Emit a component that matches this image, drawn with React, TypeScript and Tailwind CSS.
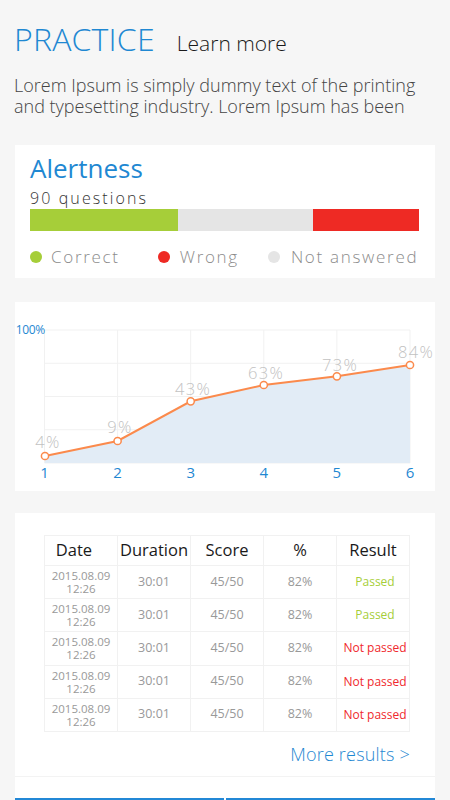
import React from 'react';

const BLUE = '#1f88d2';

const points = [
  { x: 30, y: 154, label: '4%', lx: 33, ly: 146 },
  { x: 102.6, y: 139, label: '9%', lx: 105, ly: 131 },
  { x: 175.7, y: 99.3, label: '43%', lx: 178, ly: 93 },
  { x: 248.8, y: 83, label: '63%', lx: 251, ly: 77 },
  { x: 321.9, y: 74.3, label: '73%', lx: 325, ly: 69 },
  { x: 395, y: 63, label: '84%', lx: 401, ly: 56 },
];

const gridX = [29.5, 102.6, 175.7, 248.8, 321.9, 395];
const gridY = [28, 61.25, 94.5, 127.75, 161];

const rows = [
  { result: 'Passed', ok: true },
  { result: 'Passed', ok: true },
  { result: 'Not passed', ok: false },
  { result: 'Not passed', ok: false },
  { result: 'Not passed', ok: false },
];

const ScoreChart: React.FC = () => {
  const line = points.map(p => `${p.x},${p.y}`).join(' ');
  const area = `${points[0].x},161 ${line} ${points[points.length - 1].x},161`;
  return (
    <svg width="420" height="189" viewBox="0 0 420 189" className="block">
      {gridY.map(y => (
        <line key={y} x1={29.5} x2={395} y1={y} y2={y} stroke="#f1f1f1" strokeWidth="1" />
      ))}
      {gridX.map(x => (
        <line key={x} x1={x} x2={x} y1={28} y2={161} stroke="#f1f1f1" strokeWidth="1" />
      ))}
      <polygon points={area} fill="#e2ecf6" />
      <polyline points={line} fill="none" stroke="#fb8a4c" strokeWidth="2" />
      {points.map(p => (
        <circle key={p.label} cx={p.x} cy={p.y} r="3.6" fill="#fff" stroke="#fb8a4c" strokeWidth="1.5" />
      ))}
      {points.map(p => (
        <text
          key={'t' + p.label}
          x={p.lx}
          y={p.ly}
          textAnchor="middle"
          fill="#c2c2c2"
          fontSize="16.5"
          letterSpacing="1.3"
          style={{ fontFamily: '"Open Sans", sans-serif', fontWeight: 300 }}
        >
          {p.label}
        </text>
      ))}
      <text x="30" y="32" textAnchor="end" fill={BLUE} fontSize="12" letterSpacing="-0.3" style={{ fontFamily: '"Open Sans", sans-serif' }}>
        100%
      </text>
      {gridX.map((x, i) => (
        <text key={'x' + i} x={x} y="176" textAnchor="middle" fill={BLUE} fontSize="15" style={{ fontFamily: '"Open Sans", sans-serif' }}>
          {i + 1}
        </text>
      ))}
    </svg>
  );
};

const App: React.FC = () => {
  return (
    <div className="min-h-[800px] bg-[#f6f6f6] font-['Open_Sans',sans-serif] overflow-hidden">
      {/* Header */}
      <div className="px-[14px] pt-[19px]">
        <div className="flex items-baseline">
          <h1 className="text-[32px] leading-[40px] font-light text-[#1f88d2] tracking-[0.2px]">PRACTICE</h1>
          <span className="ml-[22px] text-[21px] leading-[40px] font-light text-[#1a1a1a]">Learn more</span>
        </div>
        <p className="mt-[12px] text-[18px] leading-[21px] font-light text-[#444] whitespace-nowrap">
          Lorem Ipsum is simply dummy text of the printing
          <br />
          and typesetting industry. Lorem Ipsum has been
        </p>
      </div>

      {/* Alertness card */}
      <div className="mx-[15px] mt-[28px] bg-white h-[133px] px-[15px] pt-[6px]">
        <div className="text-[26px] leading-[34px] font-normal text-[#1f88d2]">Alertness</div>
        <div className="mt-[2px] text-[16px] leading-[22px] tracking-[2.1px] text-[#333] font-light">90 questions</div>
        <div className="flex h-[22px] w-[389px]">
          <div className="w-[148px] bg-[#a6ce39]" />
          <div className="w-[135px] bg-[#e5e5e5]" />
          <div className="flex-1 bg-[#ee2a24]" />
        </div>
        <div className="flex items-center mt-[14px] text-[17px] leading-[24px] tracking-[1.7px] text-[#8c8c8c] font-light whitespace-nowrap">
          <span className="w-[12px] h-[12px] rounded-full bg-[#a6ce39]" />
          <span className="ml-[9px]">Correct</span>
          <span className="ml-[38px] w-[12px] h-[12px] rounded-full bg-[#ee2a24]" />
          <span className="ml-[10px]">Wrong</span>
          <span className="ml-[29px] w-[12px] h-[12px] rounded-full bg-[#e5e5e5]" />
          <span className="ml-[11px]">Not answered</span>
        </div>
      </div>

      {/* Chart card */}
      <div className="mx-[15px] mt-[24px] bg-white h-[189px]">
        <ScoreChart />
      </div>

      {/* Results card */}
      <div className="mx-[15px] mt-[22px] bg-white">
        <div className="pt-[22px] px-[29px]">
          <div className="w-[366px] border-l border-t border-[#f1f1f1]">
            <div className="grid grid-cols-5 h-[30px] text-[16.5px] text-[#1a1a1a] font-normal">
              <div className="flex items-center justify-center pr-[14px] border-r border-b border-[#f1f1f1]">Date</div>
              <div className="flex items-center justify-center border-r border-b border-[#f1f1f1] whitespace-nowrap">Duration</div>
              <div className="flex items-center justify-center border-r border-b border-[#f1f1f1]">Score</div>
              <div className="flex items-center justify-center border-r border-b border-[#f1f1f1]">%</div>
              <div className="flex items-center justify-center border-r border-b border-[#f1f1f1]">Result</div>
            </div>
            {rows.map((r, i) => (
              <div key={i} className="grid grid-cols-5 h-[33.2px] text-[12.5px] text-[#999]">
                <div className="flex flex-col items-center justify-center text-[11.5px] leading-[13px] border-r border-b border-[#f1f1f1]">
                  <span>2015.08.09</span>
                  <span>12:26</span>
                </div>
                <div className="flex items-center justify-center border-r border-b border-[#f1f1f1]">30:01</div>
                <div className="flex items-center justify-center border-r border-b border-[#f1f1f1]">45/50</div>
                <div className="flex items-center justify-center border-r border-b border-[#f1f1f1]">82%</div>
                <div
                  className={
                    r.ok
                      ? 'flex items-center justify-center pl-[4px] border-r border-b border-[#f1f1f1] text-[12px] text-[#a6ce39] whitespace-nowrap'
                      : 'flex items-center justify-center pl-[4px] border-r border-b border-[#f1f1f1] text-[12px] text-[#f0282d] whitespace-nowrap'
                  }
                >
                  {r.result}
                </div>
              </div>
            ))}
          </div>
          <div className="flex justify-end w-[366px] mt-[8px] h-[36px]">
            <span className="text-[18px] leading-[28px] text-[#1f88d2] font-light tracking-[0.2px]">More results &gt;</span>
          </div>
        </div>
        <div className="border-t border-[#f3f3f3] h-[22px]" />
        <div className="flex gap-[2px]">
          <button className="flex-1 h-[44px] bg-[#2388d6] text-white text-[16px]">Start</button>
          <button className="flex-1 h-[44px] bg-[#2388d6] text-white text-[16px]">Review</button>
        </div>
      </div>
    </div>
  );
};

export default App;
